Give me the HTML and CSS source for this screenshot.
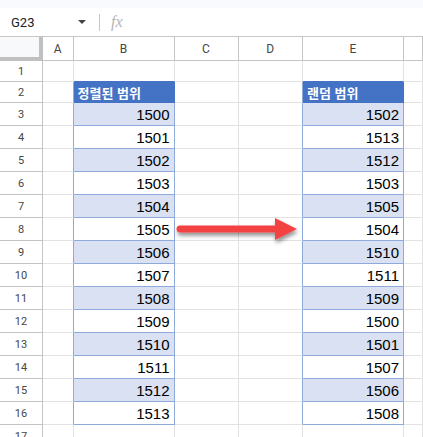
FILE: index.html
```html
<!DOCTYPE html>
<html>
<head>
<meta charset="utf-8">
<link rel="stylesheet" href="styles.css">
</head>
<body>
<div class="page">
  <div class="topband"></div>
  <div class="fbar">
    <div class="namebox">G23</div>
    <div class="dd"></div>
    <div class="divider"></div>
    <div class="fx">fx</div>
  </div>
  <div class="sheet" id="sheet"></div>
  <svg class="arrow" width="130" height="34" viewBox="0 0 130 34">
    <defs>
      <filter id="sh" x="-10%" y="-40%" width="130%" height="200%">
        <feGaussianBlur in="SourceAlpha" stdDeviation="2"/>
        <feOffset dx="1" dy="3" result="b"/>
        <feComponentTransfer><feFuncA type="linear" slope="0.45"/></feComponentTransfer>
        <feMerge><feMergeNode/><feMergeNode in="SourceGraphic"/></feMerge>
      </filter>
    </defs>
    <g filter="url(#sh)">
      <path d="M6 10.5 H101 V3 L123 14 L101 25 V17.5 H6 A3.5 3.5 0 0 1 6 10.5 Z" fill="#f34343"/>
    </g>
  </svg>
</div>
<script src="app.js"></script>
</body>
</html>
```
FILE: app.js
```js
const sorted = [1500,1501,1502,1503,1504,1505,1506,1507,1508,1509,1510,1511,1512,1513];
const rand = [1502,1513,1512,1503,1505,1504,1510,1511,1509,1500,1501,1507,1506,1508];
const cols = ['A','B','C','D','E',''];
const sheet = document.getElementById('sheet');
function cell(cls, text) {
  const d = document.createElement('div');
  d.className = cls;
  if (text !== undefined) d.textContent = text;
  sheet.appendChild(d);
  return d;
}
cell('corner');
cols.forEach(c => cell('colhdr', c));
for (let r = 1; r <= 17; r++) {
  cell('rowhdr', r);
  for (let c = 0; c < 6; c++) {
    let cls = 'c';
    let text;
    if (c === 1 || c === 4) {
      if (r === 2) { cls += ' th'; text = c === 1 ? '정렬된 범위' : '랜덤 범위'; }
      else if (r >= 3 && r <= 16) {
        cls += ' td' + (r % 2 === 1 ? ' alt' : '');
        text = (c === 1 ? sorted : rand)[r - 3];
      }
    }
    if ((c === 0 || c === 3) && r >= 2 && r <= 16) cls += ' lefttbl';
    if (r === 1 && (c === 1 || c === 4)) cls += ' abovetbl';
    cell(cls, text);
  }
}
```
FILE: styles.css
```css
* { box-sizing: border-box; }
html, body { margin: 0; padding: 0; background: #fff; }
.page { position: relative; width: 423px; height: 437px; overflow: hidden; font-family: Roboto, "Liberation Sans", Arial, sans-serif; }
.topband { height: 8px; background: #f8fafd; }
.fbar { height: 29px; display: flex; align-items: center; border-bottom: 1px solid #c7c7c7; }
.namebox { width: 78px; padding-left: 11px; font-size: 13px; color: #202124; }
.dd { width: 0; height: 0; border-left: 4px solid transparent; border-right: 4px solid transparent; border-top: 4px solid #444; margin-left: 0px; }
.divider { width: 1px; height: 17px; background: #c7c7c7; margin-left: 13px; }
.fx { margin-left: 11px; font-family: "Liberation Serif", "DejaVu Serif", serif; font-style: italic; font-size: 16px; color: #b5b5b5; }
.sheet { display: grid; grid-template-columns: 43px 30.5px 101px 64px 64.5px 101px 1fr; grid-template-rows: 24px 21px 21px repeat(14, 23px) 23px; }
.corner { background: #f8f9fa; border-right: 4px solid #c0c0c0; border-bottom: 4px solid #c0c0c0; }
.colhdr { display: flex; align-items: center; justify-content: center; font-size: 12px; color: #444746; border-right: 1px solid #c4c4c4; border-bottom: 1px solid #c4c4c4; }
.rowhdr { display: flex; align-items: center; justify-content: center; font-size: 11px; color: #444746; border-right: 1px solid #c4c4c4; border-bottom: 1px solid #c4c4c4; }
.c { border-right: 1px solid #e2e2e2; border-bottom: 1px solid #e2e2e2; font-family: "Liberation Sans", Arial, sans-serif; }
.c.lefttbl { border-right-color: #8eaadb; }
.c.abovetbl { border-bottom-color: #4472c4; }
.th { background: #4472c4; border-right-color: #4472c4; border-bottom-color: #4472c4; color: #fff; font-weight: bold; font-size: 13px; font-family: "Liberation Sans", "Noto Sans CJK KR", sans-serif; display: flex; align-items: center; padding-left: 4px; }
.td { border-right-color: #8eaadb; border-bottom-color: #8eaadb; display: flex; align-items: center; justify-content: flex-end; padding-right: 4px; font-size: 15px; color: #000; }
.td.alt { background: #d9e1f2; }
.arrow { position: absolute; left: 174px; top: 215px; }
```
